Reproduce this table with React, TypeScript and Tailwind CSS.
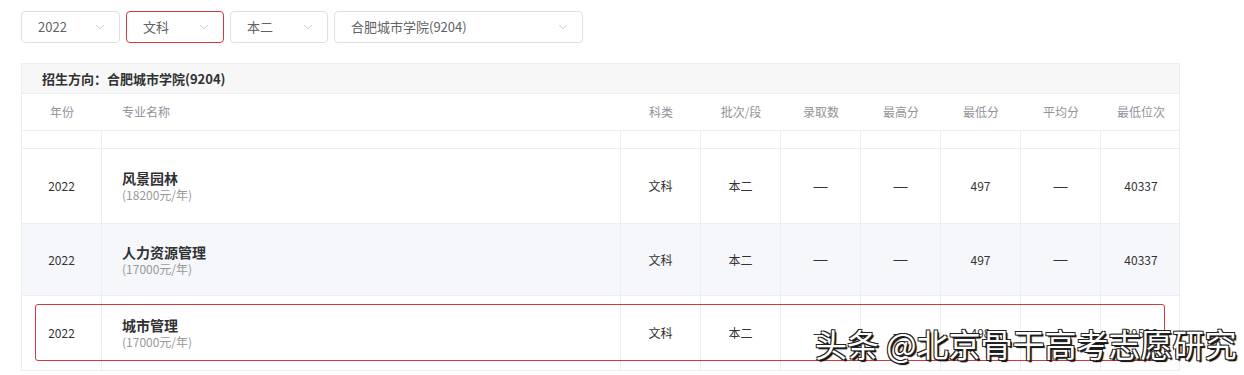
import { ChevronDown } from 'lucide-react'

const font = { fontFamily: '"Noto Sans CJK SC", "Microsoft YaHei", sans-serif' }

const cols = ['科类', '批次/段', '录取数', '最高分', '最低分', '平均分', '最低位次']

const rows = [
  { year: '2022', name: '风景园林', fee: '(18200元/年)', type: '文科', batch: '本二', count: '—', max: '—', min: '497', avg: '—', rank: '40337', shade: false, h: 'h-[75px]' },
  { year: '2022', name: '人力资源管理', fee: '(17000元/年)', type: '文科', batch: '本二', count: '—', max: '—', min: '497', avg: '—', rank: '40337', shade: true, h: 'h-[72px]' },
  { year: '2022', name: '城市管理', fee: '(17000元/年)', type: '文科', batch: '本二', count: '—', max: '—', min: '498', avg: '—', rank: '39526', shade: false, h: 'h-[74px]' },
]

function Select({ label, width, active }: { label: string; width: string; active?: boolean }) {
  return (
    <div
      className={`${width} h-[32px] flex items-center justify-between pl-[16px] pr-[12px] rounded-[4px] border bg-white text-[13px] text-[#606266] ${
        active ? 'border-[#d0393e]' : 'border-[#dcdfe6]'
      }`}
    >
      <span>{label}</span>
      <ChevronDown className="w-[14px] h-[14px] text-[#c0c4cc]" strokeWidth={1.5} />
    </div>
  )
}

export default function App() {
  return (
    <div className="relative w-[1244px] h-[375px] bg-white overflow-hidden" style={font}>
      <div className="flex gap-[6px] pl-[21px] pt-[11px]">
        <Select label="2022" width="w-[99px]" />
        <Select label="文科" width="w-[98px]" active />
        <Select label="本二" width="w-[98px]" />
        <Select label="合肥城市学院(9204)" width="w-[249px]" />
      </div>

      <div className="ml-[21px] mt-[20px] w-[1159px] border border-[#ebeef5]">
        <div className="h-[30px] flex items-center pl-[20px] bg-[#f7f7f8] border-b border-[#ebeef5] text-[13px] font-bold text-[#303133]">
          招生方向：合肥城市学院(9204)
        </div>

        <div className="grid grid-cols-[80px_519px_repeat(7,80px)] h-[37px] items-center text-[12px] text-[#909399] border-b border-[#ebeef5]">
          <div className="text-center">年份</div>
          <div className="pl-[20px]">专业名称</div>
          {cols.map((c) => (
            <div key={c} className="text-center">{c}</div>
          ))}
        </div>

        <div className="grid grid-cols-[80px_519px_repeat(7,80px)] h-[18px] border-b border-[#ebeef5]">
          {Array.from({ length: 9 }).map((_, i) => (
            <div key={i} className={i < 8 ? 'border-r border-[#ebeef5]' : ''} />
          ))}
        </div>

        {rows.map((r, idx) => (
          <div
            key={idx}
            className={`grid grid-cols-[80px_519px_repeat(7,80px)] ${r.h} text-[12px] text-[#333333] ${
              r.shade ? 'bg-[#f5f7fa]' : 'bg-white'
            } ${idx < rows.length - 1 ? 'border-b border-[#ebeef5]' : ''}`}
          >
            <div className="flex items-center justify-center border-r border-[#ebeef5]">{r.year}</div>
            <div className="flex flex-col justify-center pl-[20px] border-r border-[#ebeef5]">
              <span className="text-[14px] font-bold text-[#303133] leading-[18px]">{r.name}</span>
              <span className="text-[12px] text-[#999999] leading-[16px]">{r.fee}</span>
            </div>
            {[r.type, r.batch, r.count, r.max, r.min, r.avg, r.rank].map((v, i) => (
              <div key={i} className={`flex items-center justify-center ${i < 6 ? 'border-r border-[#ebeef5]' : ''}`}>
                {v === '—' ? <span className="text-[14px] [font-family:'Liberation_Sans',sans-serif]">—</span> : v}
              </div>
            ))}
          </div>
        ))}
      </div>

      <div className="absolute left-[35px] top-[304px] w-[1130px] h-[57px] border border-[#d0393e] rounded-[3px]" />

      <div className="absolute left-[815px] top-[324px] text-[32px] leading-[38px] text-white whitespace-nowrap [text-shadow:1px_1px_0_#222,-1px_-1px_0_#222,1px_-1px_0_#222,-1px_1px_0_#222,2px_2px_1px_#000]">
        头条 @北京骨干高考志愿研究
      </div>
    </div>
  )
}
